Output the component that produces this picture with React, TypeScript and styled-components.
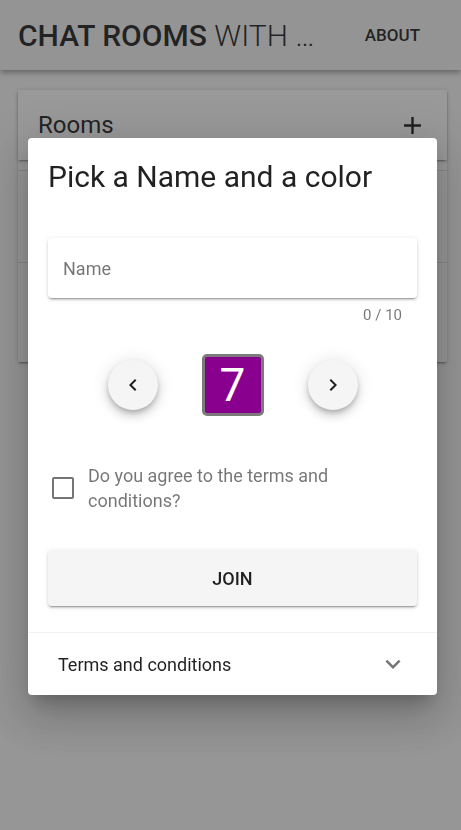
import React from 'react';
import styled, { createGlobalStyle } from 'styled-components';

const Global = createGlobalStyle`
  html, body { margin: 0; padding: 0; }
  body {
    background: #fafafa;
    font-family: Roboto, "Noto Sans", Arial, sans-serif;
    width: 461px;
    height: 830px;
    overflow: hidden;
  }
  * { box-sizing: border-box; }
`;

const elev2 = '0 3px 1px -2px rgba(0,0,0,.2), 0 2px 2px 0 rgba(0,0,0,.14), 0 1px 5px 0 rgba(0,0,0,.12)';
const elev4 = '0 2px 4px -1px rgba(0,0,0,.2), 0 4px 5px 0 rgba(0,0,0,.14), 0 1px 10px 0 rgba(0,0,0,.12)';
const elev6 = '0 3px 5px -1px rgba(0,0,0,.2), 0 6px 10px 0 rgba(0,0,0,.14), 0 1px 18px 0 rgba(0,0,0,.12)';
const elev24 = '0 11px 15px -7px rgba(0,0,0,.2), 0 24px 38px 3px rgba(0,0,0,.14), 0 9px 46px 8px rgba(0,0,0,.12)';

const Page = styled.div`
  min-height: 830px;
  background: #fafafa;
`;

const Toolbar = styled.header`
  position: relative;
  height: 70px;
  background: #f5f5f5;
  display: flex;
  align-items: center;
  padding: 0 41px 0 18px;
  box-shadow: ${elev4};
`;

const AppTitle = styled.h1`
  flex: 1;
  margin: 0;
  font-size: 30px;
  font-weight: 500;
  color: rgba(0, 0, 0, 0.87);
  white-space: nowrap;
`;

const Light = styled.span`
  font-weight: 300;
`;

const NavButton = styled.button`
  border: 0;
  background: none;
  padding: 0;
  font-family: Roboto, Arial, sans-serif;
  font-size: 17px;
  font-weight: 500;
  color: rgba(0, 0, 0, 0.87);
  text-transform: uppercase;
`;

const Content = styled.main`
  padding: 20px 14px 0 18px;
`;

const RoomsCard = styled.section`
  background: #fff;
  border-radius: 2px;
  box-shadow: ${elev2};
`;

const CardHeader = styled.div`
  position: relative;
  height: 70px;
  display: flex;
  align-items: center;
  justify-content: space-between;
  padding: 0 20px;
  font-size: 24px;
  color: rgba(0, 0, 0, 0.87);
  box-shadow: ${elev2};
`;

const RoomList = styled.div`
  padding: 10px 0 8px;
`;

const RoomRow = styled.div`
  height: 92px;
  border-top: 1px solid rgba(0, 0, 0, 0.12);
`;

const Overlay = styled.div`
  position: fixed;
  inset: 0;
  background: rgba(33, 33, 33, 0.46);
`;

const DialogLayer = styled.div`
  position: fixed;
  inset: 0;
  display: flex;
  align-items: center;
  justify-content: center;
  padding: 3px 0 0 4px;
`;

const Dialog = styled.div`
  width: 409px;
  background: #fff;
  border-radius: 4px;
  box-shadow: ${elev24};
  overflow: hidden;
`;

const DialogBody = styled.div`
  padding: 21px 20px 26px;
`;

const DialogTitle = styled.h2`
  margin: 0;
  font-size: 30px;
  line-height: 36px;
  font-weight: 400;
  color: rgba(0, 0, 0, 0.87);
`;

const Field = styled.div`
  margin-top: 43px;
  height: 60px;
  display: flex;
  align-items: center;
  padding: 0 15px;
  border-radius: 4px;
  background: #fff;
  box-shadow: ${elev2};
`;

const Input = styled.input`
  flex: 1;
  border: 0;
  outline: none;
  background: transparent;
  font-family: Roboto, Arial, sans-serif;
  font-size: 18px;
  color: rgba(0, 0, 0, 0.87);
  padding: 0;
  &::placeholder {
    color: rgba(0, 0, 0, 0.54);
  }
`;

const Counter = styled.div`
  margin-top: 9px;
  padding-right: 15px;
  text-align: right;
  font-size: 15px;
  line-height: 16px;
  color: rgba(0, 0, 0, 0.54);
`;

const Pager = styled.div`
  margin-top: 31px;
  display: flex;
  align-items: center;
  justify-content: center;
  gap: 44px;
`;

const RoundButton = styled.button`
  width: 50px;
  height: 50px;
  border-radius: 50%;
  border: 0;
  padding: 0;
  background: #f5f5f5;
  box-shadow: ${elev6};
  display: flex;
  align-items: center;
  justify-content: center;
  color: rgba(0, 0, 0, 0.87);
`;

const ColorBox = styled.div<{ $color: string }>`
  width: 62px;
  height: 62px;
  border: 3px solid #7b7b7b;
  border-radius: 5px;
  background: ${(p) => p.$color};
  color: #fff;
  font-size: 46px;
  line-height: 1;
  display: flex;
  align-items: center;
  justify-content: center;
`;

const AgreeRow = styled.label`
  margin-top: 47px;
  display: flex;
  align-items: center;
  gap: 14px;
  padding-left: 4px;
`;

const CheckBox = styled.span`
  flex: none;
  width: 22px;
  height: 22px;
  border: 2.5px solid rgba(0, 0, 0, 0.54);
  border-radius: 2px;
`;

const AgreeText = styled.span`
  font-size: 18px;
  line-height: 25px;
  color: rgba(0, 0, 0, 0.54);
`;

const JoinButton = styled.button`
  margin-top: 37px;
  width: 100%;
  height: 56px;
  border: 0;
  border-radius: 4px;
  background: #f5f5f5;
  box-shadow: ${elev2};
  font-family: Roboto, Arial, sans-serif;
  font-size: 18px;
  font-weight: 500;
  color: rgba(0, 0, 0, 0.87);
  text-transform: uppercase;
`;

const PanelHeader = styled.div`
  height: 63px;
  border-top: 1px solid rgba(0, 0, 0, 0.05);
  display: flex;
  align-items: center;
  justify-content: space-between;
  padding: 0 29px 0 30px;
  font-size: 18px;
  color: rgba(0, 0, 0, 0.87);
`;

const Icon = ({ d, size, color }: { d: string; size: number; color: string }) => (
  <svg width={size} height={size} viewBox="0 0 24 24" fill={color}>
    <path d={d} />
  </svg>
);

const PLUS = 'M19 13h-6v6h-2v-6H5v-2h6V5h2v6h6v2z';
const LEFT = 'M15.41 7.41L14 6l-6 6 6 6 1.41-1.41L10.83 12z';
const RIGHT = 'M8.59 16.59L10 18l6-6-6-6-1.41 1.41L13.17 12z';
const DOWN = 'M16.59 8.59L12 13.17 7.41 8.59 6 10l6 6 6-6z';

export default function App() {
  return (
    <>
      <Global />
      <Page>
        <Toolbar>
          <AppTitle>
            CHAT ROOMS <Light>WITH …</Light>
          </AppTitle>
          <NavButton>About</NavButton>
        </Toolbar>
        <Content>
          <RoomsCard>
            <CardHeader>
              <span>Rooms</span>
              <Icon d={PLUS} size={29} color="rgba(0,0,0,0.87)" />
            </CardHeader>
            <RoomList>
              <RoomRow />
              <RoomRow />
            </RoomList>
          </RoomsCard>
        </Content>
      </Page>
      <Overlay />
      <DialogLayer>
        <Dialog>
          <DialogBody>
            <DialogTitle>Pick a Name and a color</DialogTitle>
            <Field>
              <Input placeholder="Name" />
            </Field>
            <Counter>0 / 10</Counter>
            <Pager>
              <RoundButton aria-label="previous color">
                <Icon d={LEFT} size={24} color="rgba(0,0,0,0.87)" />
              </RoundButton>
              <ColorBox $color="#89008f">7</ColorBox>
              <RoundButton aria-label="next color">
                <Icon d={RIGHT} size={24} color="rgba(0,0,0,0.87)" />
              </RoundButton>
            </Pager>
            <AgreeRow>
              <CheckBox />
              <AgreeText>Do you agree to the terms and conditions?</AgreeText>
            </AgreeRow>
            <JoinButton>Join</JoinButton>
          </DialogBody>
          <PanelHeader>
            <span>Terms and conditions</span>
            <Icon d={DOWN} size={30} color="rgba(0,0,0,0.54)" />
          </PanelHeader>
        </Dialog>
      </DialogLayer>
    </>
  );
}
